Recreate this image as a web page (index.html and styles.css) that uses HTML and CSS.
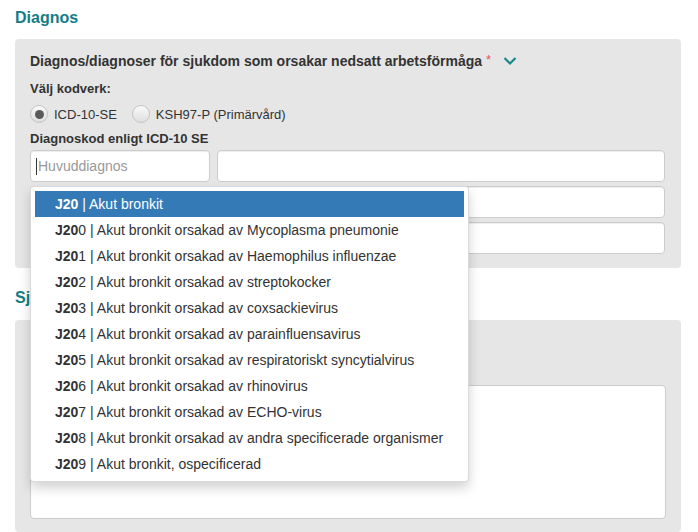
FILE: index.html
```html
<!DOCTYPE html>
<html lang="sv">
<head>
<meta charset="utf-8">
<title>Diagnos</title>
<link rel="stylesheet" href="styles.css">
</head>
<body>
<h2 class="section-title">Diagnos</h2>
<div class="panel panel-diagnos">
  <div class="field-label main">Diagnos/diagnoser för sjukdom som orsakar nedsatt arbetsförmåga <span class="req">*</span>
    <svg class="chevron" width="14" height="10" viewBox="0 0 14 10"><path d="M1.5 2 L7 7.5 L12.5 2" fill="none" stroke="#17878a" stroke-width="2.2"/></svg>
  </div>
  <div class="field-label">Välj kodverk:</div>
  <div class="radios">
    <label class="radio"><span class="radio-dot checked"></span>ICD-10-SE</label>
    <label class="radio"><span class="radio-dot"></span>KSH97-P (Primärvård)</label>
  </div>
  <div class="field-label">Diagnoskod enligt ICD-10 SE</div>
  <div class="code-rows">
    <div class="code-row">
      <div class="code-cell">
        <div class="input"><span class="caret"></span><span class="placeholder">Huvuddiagnos</span></div>
        <ul class="dropdown">
          <li class="active"><b>J20</b> | Akut bronkit</li>
          <li><b>J20</b>0 | Akut bronkit orsakad av Mycoplasma pneumonie</li>
          <li><b>J20</b>1 | Akut bronkit orsakad av Haemophilus influenzae</li>
          <li><b>J20</b>2 | Akut bronkit orsakad av streptokocker</li>
          <li><b>J20</b>3 | Akut bronkit orsakad av coxsackievirus</li>
          <li><b>J20</b>4 | Akut bronkit orsakad av parainfluensavirus</li>
          <li><b>J20</b>5 | Akut bronkit orsakad av respiratoriskt syncytialvirus</li>
          <li><b>J20</b>6 | Akut bronkit orsakad av rhinovirus</li>
          <li><b>J20</b>7 | Akut bronkit orsakad av ECHO-virus</li>
          <li><b>J20</b>8 | Akut bronkit orsakad av andra specificerade organismer</li>
          <li><b>J20</b>9 | Akut bronkit, ospecificerad</li>
        </ul>
      </div>
      <div class="input wide"></div>
    </div>
    <div class="code-row">
      <div class="input"></div>
      <div class="input wide"></div>
    </div>
    <div class="code-row">
      <div class="input"></div>
      <div class="input wide"></div>
    </div>
  </div>
</div>
<h2 class="section-title second">Sjukdomens konsekvenser</h2>
<div class="panel panel-second">
  <div class="textarea"></div>
</div>
</body>
</html>
```
FILE: styles.css
```css
* { box-sizing: border-box; }
html, body { margin: 0; padding: 0; background: #fff; }
body {
  font-family: "Liberation Sans", Arial, sans-serif;
  color: #333;
  font-size: 14px;
  overflow: hidden;
  height: 532px;
}
.section-title {
  margin: 0;
  padding: 9px 15px 0;
  font-size: 16px;
  line-height: 18px;
  font-weight: bold;
  color: #137d87;
}
.section-title.second { padding-top: 21px; }
.panel {
  margin: 12px 17px 0 15px;
  background: #e6e6e6;
  border-radius: 4px;
  padding: 13px 16px 14px 15px;
}
.panel-second { margin-top: 13px; padding-top: 65px; height: 212px; }
.field-label {
  font-size: 13px;
  font-weight: bold;
  line-height: 18px;
  margin-bottom: 10px;
  display: flex;
  align-items: center;
}
.field-label.main { font-size: 14px; }
.field-label .req { color: #e4545a; font-weight: normal; margin-left: 4px; position: relative; top: -1px; font-size: 13px; }
.chevron { margin-left: 12px; }
.radios {
  display: flex;
  align-items: center;
  height: 20px;
  margin-top: -4px;
  margin-bottom: 6px;
  font-size: 13px;
}
.radio { display: flex; align-items: center; margin-right: 15px; }
.radio-dot {
  width: 18px;
  height: 18px;
  border-radius: 50%;
  border: 1px solid #c4c4c4;
  background: linear-gradient(#fafafa, #dedede);
  margin-right: 6px;
  display: flex;
  align-items: center;
  justify-content: center;
}
.radio-dot.checked::after {
  content: "";
  width: 9px;
  height: 9px;
  border-radius: 50%;
  background: #5a5a5a;
}
.field-label + .code-rows { margin-top: -8px; }
.code-rows { display: flex; flex-direction: column; gap: 4px; }
.code-row { display: flex; gap: 7px; }
.code-cell { position: relative; }
.input {
  width: 180px;
  height: 32px;
  background: #fff;
  border: 1px solid #ccc;
  border-radius: 4px;
  box-shadow: inset 0 1px 1px rgba(0,0,0,.075);
  display: flex;
  align-items: center;
  padding-left: 5px;
}
.input.wide { width: 448px; flex: 1; }
.caret { width: 1px; height: 17px; background: #333; margin-right: 1px; }
.placeholder { color: #999; font-size: 14px; }
.dropdown {
  position: absolute;
  top: calc(100% + 4px);
  left: 0;
  z-index: 10;
  width: 439px;
  margin: 0;
  padding: 4px;
  list-style: none;
  background: #fff;
  border: 1px solid rgba(0,0,0,.15);
  border-radius: 4px;
  box-shadow: 0 6px 12px rgba(0,0,0,.175);
}
.dropdown li {
  height: 26px;
  line-height: 26px;
  padding-left: 20px;
  font-size: 14px;
  color: #333;
  white-space: nowrap;
}
.dropdown li.active { background: #337ab7; color: #fff; }
.textarea {
  height: 134px;
  background: #fff;
  border: 1px solid #ccc;
  border-radius: 4px;
  margin-right: -1px;
}
```
